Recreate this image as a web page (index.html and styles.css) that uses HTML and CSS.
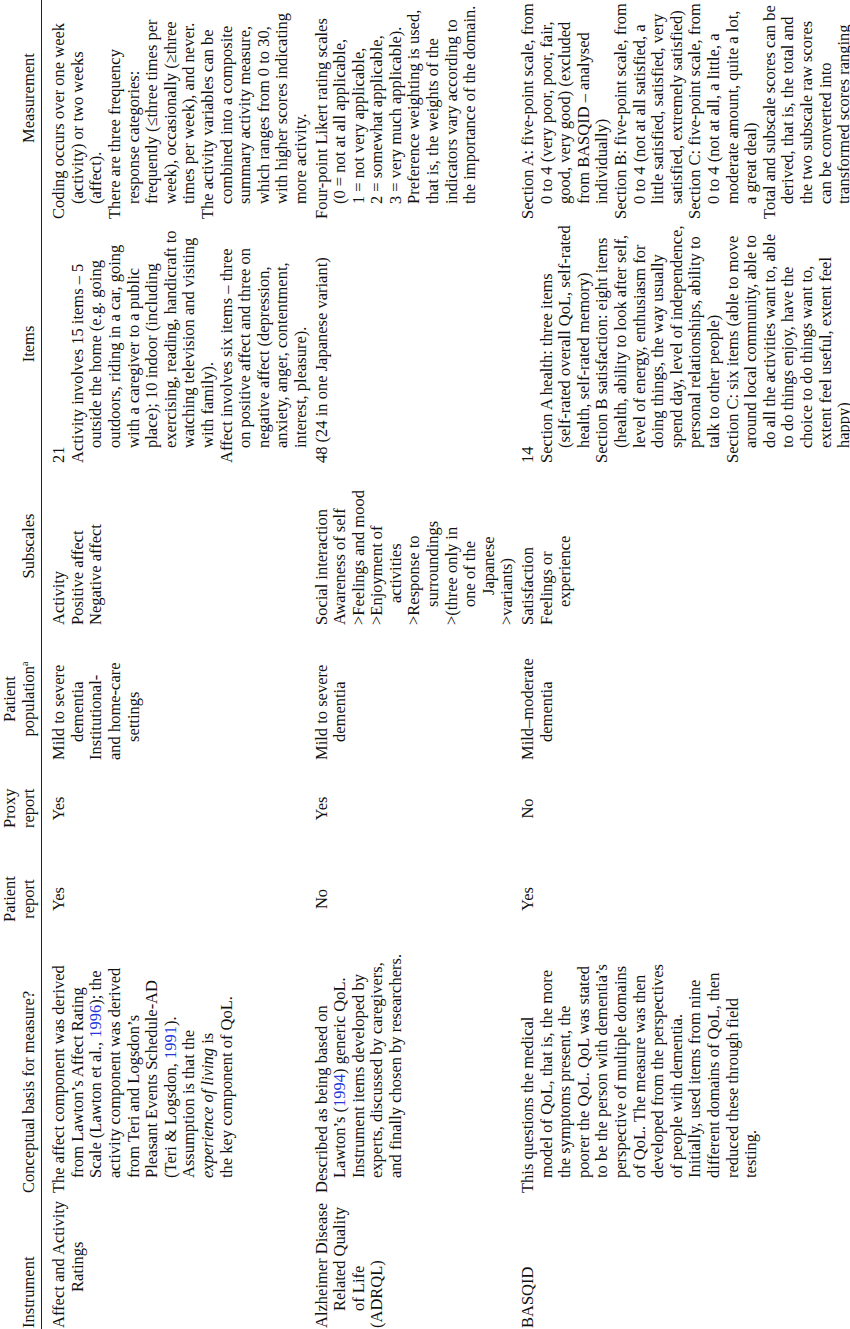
FILE: index.html
```html
<!DOCTYPE html>
<html lang="en">
<head>
<meta charset="utf-8">
<title>Table</title>
<link rel="stylesheet" href="styles.css">
</head>
<body>
<div class="page">
  <div class="table">
    <div class="row head">
      <div class="cell c1"><div class="ln">Instrument</div></div>
      <div class="cell c2"><div class="ln">Conceptual basis for measure?</div></div>
      <div class="cell c3 ctr"><div class="ln">Patient</div><div class="ln">report</div></div>
      <div class="cell c4 ctr"><div class="ln">Proxy</div><div class="ln">report</div></div>
      <div class="cell c5 ctr hc5"><div class="ln">Patient</div><div class="ln">population<sup>a</sup></div></div>
      <div class="cell c6 ctr hc6"><div class="ln">Subscales</div></div>
      <div class="cell c7 ctr hc7"><div class="ln">Items</div></div>
      <div class="cell c8 ctr hc8"><div class="ln">Measurement</div></div>
    </div>

    <div class="body">
    <div class="row">
      <div class="cell c1">
        <div class="ln">Affect and Activity</div>
        <div class="ln h36">Ratings</div>
      </div>
      <div class="cell c2">
        <div class="ln">The affect component was derived</div>
        <div class="ln h">from Lawton’s Affect Rating</div>
        <div class="ln h">Scale (Lawton et al., <span class="ref">1996</span>); the</div>
        <div class="ln h">activity component was derived</div>
        <div class="ln h">from Teri and Logsdon’s</div>
        <div class="ln h">Pleasant Events Schedule-AD</div>
        <div class="ln h">(Teri &amp; Logsdon, <span class="ref">1991</span>).</div>
        <div class="ln h">Assumption is that the</div>
        <div class="ln h"><i>experience of living</i> is</div>
        <div class="ln h">the key component of QoL.</div>
      </div>
      <div class="cell c3 ctr"><div class="ln">Yes</div></div>
      <div class="cell c4 ctr"><div class="ln">Yes</div></div>
      <div class="cell c5">
        <div class="ln">Mild to severe</div>
        <div class="ln h18">dementia</div>
        <div class="ln">Institutional-</div>
        <div class="ln">and home-care</div>
        <div class="ln h18">settings</div>
      </div>
      <div class="cell c6">
        <div class="ln">Activity</div>
        <div class="ln">Positive affect</div>
        <div class="ln">Negative affect</div>
      </div>
      <div class="cell c7">
        <div class="ln">21</div>
        <div class="ln">Activity involves 15 items – 5</div>
        <div class="ln h">outside the home (e.g. going</div>
        <div class="ln h">outdoors, riding in a car, going</div>
        <div class="ln h">with a caregiver to a public</div>
        <div class="ln h">place); 10 indoor (including</div>
        <div class="ln h">exercising, reading, handicraft to</div>
        <div class="ln h">watching television and visiting</div>
        <div class="ln h">with family).</div>
        <div class="ln">Affect involves six items – three</div>
        <div class="ln h">on positive affect and three on</div>
        <div class="ln h">negative affect (depression,</div>
        <div class="ln h">anxiety, anger, contentment,</div>
        <div class="ln h">interest, pleasure).</div>
      </div>
      <div class="cell c8">
        <div class="ln">Coding occurs over one week</div>
        <div class="ln h">(activity) or two weeks</div>
        <div class="ln h">(affect).</div>
        <div class="ln">There are three frequency</div>
        <div class="ln h">response categories:</div>
        <div class="ln h">frequently (≤three times per</div>
        <div class="ln h">week), occasionally (≥three</div>
        <div class="ln h">times per week), and never.</div>
        <div class="ln">The activity variables can be</div>
        <div class="ln h">combined into a composite</div>
        <div class="ln h">summary activity measure,</div>
        <div class="ln h">which ranges from 0 to 30,</div>
        <div class="ln h">with higher scores indicating</div>
        <div class="ln h">more activity.</div>
      </div>
    </div>

    <div class="row">
      <div class="cell c1">
        <div class="ln">Alzheimer Disease</div>
        <div class="ln h17">Related Quality</div>
        <div class="ln h17">of Life</div>
        <div class="ln">(ADRQL)</div>
      </div>
      <div class="cell c2">
        <div class="ln">Described as being based on</div>
        <div class="ln h">Lawton’s (<span class="ref">1994</span>) generic QoL.</div>
        <div class="ln h">Instrument items developed by</div>
        <div class="ln h">experts, discussed by caregivers,</div>
        <div class="ln h">and finally chosen by researchers.</div>
      </div>
      <div class="cell c3 ctr"><div class="ln">No</div></div>
      <div class="cell c4 ctr"><div class="ln">Yes</div></div>
      <div class="cell c5">
        <div class="ln">Mild to severe</div>
        <div class="ln h18">dementia</div>
      </div>
      <div class="cell c6">
        <div class="ln">Social interaction</div>
        <div class="ln">Awareness of self</div>
        <div class="ln">&gt;Feelings and mood</div>
        <div class="ln">&gt;Enjoyment of</div>
        <div class="ln h24">activities</div>
        <div class="ln">&gt;Response to</div>
        <div class="ln h18">surroundings</div>
        <div class="ln">&gt;(three only in</div>
        <div class="ln h18">one of the</div>
        <div class="ln h30">Japanese</div>
        <div class="ln">&gt;variants)</div>
      </div>
      <div class="cell c7">
        <div class="ln">48 (24 in one Japanese variant)</div>
      </div>
      <div class="cell c8">
        <div class="ln">Four-point Likert rating scales</div>
        <div class="ln h">(0 = not at all applicable,</div>
        <div class="ln h">1 = not very applicable,</div>
        <div class="ln h">2 = somewhat applicable,</div>
        <div class="ln h">3 = very much applicable).</div>
        <div class="ln h">Preference weighting is used,</div>
        <div class="ln h">that is, the weights of the</div>
        <div class="ln h">indicators vary according to</div>
        <div class="ln h">the importance of the domain.</div>
      </div>
    </div>

    <div class="row">
      <div class="cell c1">
        <div class="ln">BASQID</div>
      </div>
      <div class="cell c2">
        <div class="ln">This questions the medical</div>
        <div class="ln h">model of QoL, that is, the more</div>
        <div class="ln h">the symptoms present, the</div>
        <div class="ln h">poorer the QoL. QoL was stated</div>
        <div class="ln h">to be the person with dementia’s</div>
        <div class="ln h">perspective of multiple domains</div>
        <div class="ln h">of QoL. The measure was then</div>
        <div class="ln h">developed from the perspectives</div>
        <div class="ln h">of people with dementia.</div>
        <div class="ln h">Initially, used items from nine</div>
        <div class="ln h">different domains of QoL, then</div>
        <div class="ln h">reduced these through field</div>
        <div class="ln h">testing.</div>
      </div>
      <div class="cell c3 ctr"><div class="ln">Yes</div></div>
      <div class="cell c4 ctr"><div class="ln">No</div></div>
      <div class="cell c5">
        <div class="ln">Mild–moderate</div>
        <div class="ln h18">dementia</div>
      </div>
      <div class="cell c6">
        <div class="ln">Satisfaction</div>
        <div class="ln">Feelings or</div>
        <div class="ln h18">experience</div>
      </div>
      <div class="cell c7">
        <div class="ln">14</div>
        <div class="ln">Section A health: three items</div>
        <div class="ln h">(self-rated overall QoL, self-rated</div>
        <div class="ln h">health, self-rated memory)</div>
        <div class="ln">Section B satisfaction: eight items</div>
        <div class="ln h">(health, ability to look after self,</div>
        <div class="ln h">level of energy, enthusiasm for</div>
        <div class="ln h">doing things, the way usually</div>
        <div class="ln h">spend day, level of independence,</div>
        <div class="ln h">personal relationships, ability to</div>
        <div class="ln h">talk to other people)</div>
        <div class="ln">Section C: six items (able to move</div>
        <div class="ln h">around local community, able to</div>
        <div class="ln h">do all the activities want to, able</div>
        <div class="ln h">to do things enjoy, have the</div>
        <div class="ln h">choice to do things want to,</div>
        <div class="ln h">extent feel useful, extent feel</div>
        <div class="ln h">happy)</div>
      </div>
      <div class="cell c8">
        <div class="ln">Section A: five-point scale, from</div>
        <div class="ln h">0 to 4 (very poor, poor, fair,</div>
        <div class="ln h">good, very good) (excluded</div>
        <div class="ln h">from BASQID – analysed</div>
        <div class="ln h">individually)</div>
        <div class="ln">Section B: five-point scale, from</div>
        <div class="ln h">0 to 4 (not at all satisfied, a</div>
        <div class="ln h">little satisfied, satisfied, very</div>
        <div class="ln h">satisfied, extremely satisfied)</div>
        <div class="ln">Section C: five-point scale, from</div>
        <div class="ln h">0 to 4 (not at all, a little, a</div>
        <div class="ln h">moderate amount, quite a lot,</div>
        <div class="ln h">a great deal)</div>
        <div class="ln">Total and subscale scores can be</div>
        <div class="ln h">derived, that is, the total and</div>
        <div class="ln h">the two subscale raw scores</div>
        <div class="ln h">can be converted into</div>
        <div class="ln h">transformed scores ranging</div>
      </div>
    </div>
    </div>
  </div>
</div>
</body>
</html>
```

FILE: styles.css
```css
html, body {
  margin: 0;
  padding: 0;
  background: #ffffff;
}

.page {
  width: 850px;
  height: 1329px;
  overflow: hidden;
  background: #ffffff;
}

.table {
  width: 1372px;
  height: 850px;
  transform-origin: 0 0;
  transform: translateY(1329px) rotate(-90deg);
  font-family: "Liberation Serif", "Times New Roman", serif;
  font-size: 16.5px;
  line-height: 18.6px;
  color: #111111;
}

.row {
  display: flex;
  align-items: flex-start;
  padding-bottom: 2px;
}

.head {
  align-items: stretch;
  padding-top: 1px;
  padding-bottom: 3px;
  border-bottom: 1.6px solid #222222;
}

.head .cell {
  display: flex;
  flex-direction: column;
  justify-content: flex-end;
}

.body {
  padding-top: 8px;
}

.cell {
  box-sizing: border-box;
  flex: none;
}

.ln {
  white-space: nowrap;
}

.h { padding-left: 15px; }
.h17 { padding-left: 17px; }
.h18 { padding-left: 18px; }
.h24 { padding-left: 22px; }
.h30 { padding-left: 30px; }
.h36 { padding-left: 36px; }

.ctr { text-align: center; }

.c1 { width: 136px; padding-left: 1px; }
.c2 { width: 269px; }
.c3 { width: 96px; padding-right: 46px; }
.c4 { width: 68px; padding-right: 29px; }
.c5 { width: 135px; }
.c6 { width: 162px; }
.c7 { width: 244px; }
.c8 { width: 260px; }

.hc5 { padding-right: 13px; }
.hc6 { padding-right: 4px; }
.hc7 { padding-right: 6px; }
.hc8 { padding-right: 18px; }

sup {
  font-size: 10px;
  line-height: 0;
  vertical-align: 6px;
}

.ref {
  color: #2436d8;
}
```
